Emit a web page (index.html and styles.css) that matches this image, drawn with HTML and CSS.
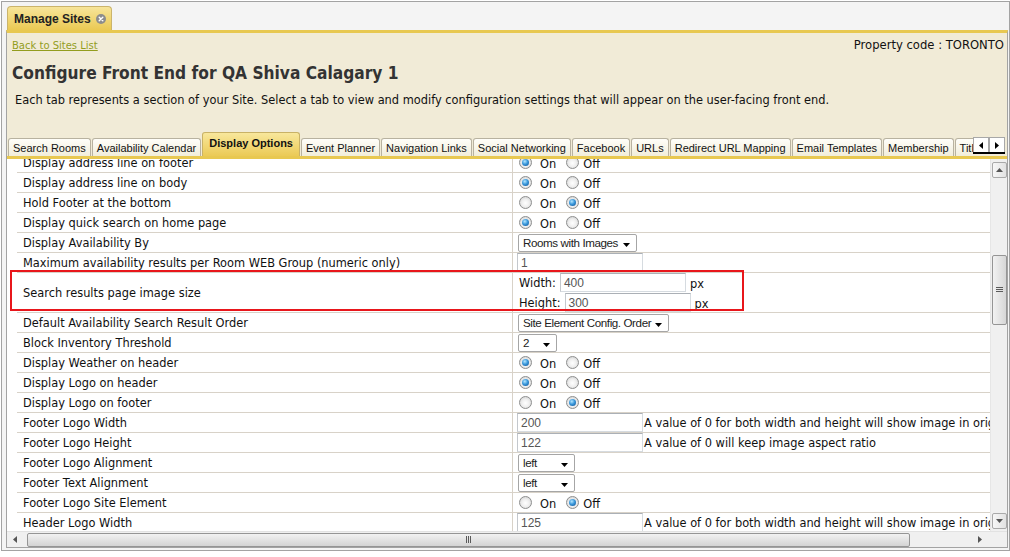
FILE: index.html
```html
<!DOCTYPE html>
<html>
<head>
<meta charset="utf-8">
<title>Manage Sites</title>
<link rel="stylesheet" href="styles.css">
</head>
<body>
<div class="frame">
  <div class="topbar">
    <div class="maintab">
      <span>Manage Sites</span>
      <svg class="close" width="10" height="10" viewBox="0 0 10 10"><circle cx="5" cy="5" r="5" fill="#8c8c8c"/><path d="M3.2 3.2 L6.8 6.8 M6.8 3.2 L3.2 6.8" stroke="#fff" stroke-width="1.4" stroke-linecap="round"/></svg>
    </div>
  </div>
  <div class="panel">
    <div class="head">
      <div class="headrow">
        <a class="back" href="#">Back to Sites List</a>
        <span class="prop">Property code : TORONTO</span>
      </div>
      <h1 class="title">Configure Front End for QA Shiva Calagary 1</h1>
      <p class="desc">Each tab represents a section of your Site. Select a tab to view and modify configuration settings that will appear on the user-facing front end.</p>
    </div>
    <div class="tabs">
      <div class="tablist">
        <div class="tab">Search Rooms</div>
        <div class="tab">Availability Calendar</div>
        <div class="tab active">Display Options</div>
        <div class="tab">Event Planner</div>
        <div class="tab">Navigation Links</div>
        <div class="tab">Social Networking</div>
        <div class="tab">Facebook</div>
        <div class="tab">URLs</div>
        <div class="tab">Redirect URL Mapping</div>
        <div class="tab">Email Templates</div>
        <div class="tab">Membership</div>
        <div class="tab">Title Bar</div>
      </div>
      <div class="tabscroll">
        <span class="tsbtn"><svg width="4" height="7" viewBox="0 0 4 7"><path d="M4 0 L0 3.5 L4 7Z" fill="#000"/></svg></span>
        <span class="tsbtn"><svg width="4" height="7" viewBox="0 0 4 7"><path d="M0 0 L4 3.5 L0 7Z" fill="#000"/></svg></span>
      </div>
    </div>
    <div class="body">
      <div class="viewport">
        <div class="rows">
          <div class="row"><div class="lab">Display address line on footer</div><div class="val"><span class="rb on"></span><span class="rl">On</span><span class="rb gap"></span><span class="rl r2">Off</span></div></div>
          <div class="row"><div class="lab">Display address line on body</div><div class="val"><span class="rb on"></span><span class="rl">On</span><span class="rb gap"></span><span class="rl r2">Off</span></div></div>
          <div class="row"><div class="lab">Hold Footer at the bottom</div><div class="val"><span class="rb"></span><span class="rl">On</span><span class="rb on gap"></span><span class="rl r2">Off</span></div></div>
          <div class="row"><div class="lab">Display quick search on home page</div><div class="val"><span class="rb on"></span><span class="rl">On</span><span class="rb gap"></span><span class="rl r2">Off</span></div></div>
          <div class="row"><div class="lab">Display Availability By</div><div class="val"><span class="sel w119">Rooms with Images<svg class="arr" width="7" height="4" viewBox="0 0 7 4"><path d="M0 0 H7 L3.5 4Z" fill="#000"/></svg></span></div></div>
          <div class="row"><div class="lab">Maximum availability results per Room WEB Group (numeric only)</div><div class="val"><span class="inp">1</span></div></div>
          <div class="row tall"><div class="lab">Search results page image size</div><div class="val stack">
            <div class="dim"><span class="dl">Width:</span><span class="inp">400</span><span class="px">px</span></div>
            <div class="dim"><span class="dl">Height:</span><span class="inp">300</span><span class="px">px</span></div>
          </div></div>
          <div class="row"><div class="lab">Default Availability Search Result Order</div><div class="val"><span class="sel w151">Site Element Config. Order<svg class="arr" width="7" height="4" viewBox="0 0 7 4"><path d="M0 0 H7 L3.5 4Z" fill="#000"/></svg></span></div></div>
          <div class="row"><div class="lab">Block Inventory Threshold</div><div class="val"><span class="sel w39">2<svg class="arr" width="7" height="4" viewBox="0 0 7 4"><path d="M0 0 H7 L3.5 4Z" fill="#000"/></svg></span></div></div>
          <div class="row"><div class="lab">Display Weather on header</div><div class="val"><span class="rb on"></span><span class="rl">On</span><span class="rb gap"></span><span class="rl r2">Off</span></div></div>
          <div class="row"><div class="lab">Display Logo on header</div><div class="val"><span class="rb on"></span><span class="rl">On</span><span class="rb gap"></span><span class="rl r2">Off</span></div></div>
          <div class="row"><div class="lab">Display Logo on footer</div><div class="val"><span class="rb"></span><span class="rl">On</span><span class="rb on gap"></span><span class="rl r2">Off</span></div></div>
          <div class="row"><div class="lab">Footer Logo Width</div><div class="val"><span class="inp">200</span><span class="hint">A value of 0 for both width and height will show image in original size</span></div></div>
          <div class="row"><div class="lab">Footer Logo Height</div><div class="val"><span class="inp">122</span><span class="hint">A value of 0 will keep image aspect ratio</span></div></div>
          <div class="row"><div class="lab">Footer Logo Alignment</div><div class="val"><span class="sel w57">left<svg class="arr" width="7" height="4" viewBox="0 0 7 4"><path d="M0 0 H7 L3.5 4Z" fill="#000"/></svg></span></div></div>
          <div class="row"><div class="lab">Footer Text Alignment</div><div class="val"><span class="sel w57">left<svg class="arr" width="7" height="4" viewBox="0 0 7 4"><path d="M0 0 H7 L3.5 4Z" fill="#000"/></svg></span></div></div>
          <div class="row"><div class="lab">Footer Logo Site Element</div><div class="val"><span class="rb"></span><span class="rl">On</span><span class="rb on gap"></span><span class="rl r2">Off</span></div></div>
          <div class="row"><div class="lab">Header Logo Width</div><div class="val"><span class="inp">125</span><span class="hint">A value of 0 for both width and height will show image in original size</span></div></div>
          <div class="row"><div class="lab">Header Logo Height</div><div class="val"><span class="inp">80</span><span class="hint">A value of 0 will keep image aspect ratio</span></div></div>
        </div>
        <div class="highlight"></div>
      </div>
      <div class="vscroll">
        <span class="sbtn"><svg width="7" height="4" viewBox="0 0 7 4"><path d="M0 4 H7 L3.5 0Z" fill="#555"/></svg></span>
        <span class="vthumb"><svg width="7" height="6" viewBox="0 0 7 6"><path d="M0 0.5 H7 M0 2.5 H7 M0 4.5 H7" stroke="#5a5a5a" stroke-width="1"/></svg></span>
        <span class="vfill"></span>
        <span class="sbtn"><svg width="7" height="4" viewBox="0 0 7 4"><path d="M0 0 H7 L3.5 4Z" fill="#555"/></svg></span>
      </div>
    </div>
    <div class="hscroll">
      <svg class="harr" width="4" height="7" viewBox="0 0 4 7"><path d="M4 0 L0 3.5 L4 7Z" fill="#555"/></svg>
      <span class="hthumb"><svg width="6" height="7" viewBox="0 0 6 7"><path d="M0.5 0 V7 M2.5 0 V7 M4.5 0 V7" stroke="#5a5a5a" stroke-width="1"/></svg></span>
      <svg class="harr r" width="4" height="7" viewBox="0 0 4 7"><path d="M0 0 L4 3.5 L0 7Z" fill="#555"/></svg>
    </div>
  </div>
</div>
</body>
</html>
```

FILE: styles.css
```css
html, body {
  margin: 0;
  padding: 0;
  background: #ffffff;
}

body {
  font-family: "DejaVu Sans", Verdana, sans-serif;
  font-size: 11.4px;
  color: #111;
}

.frame {
  margin: 1px 0 0 1px;
  width: 1007px;
  height: 548px;
  border: 1px solid #a3a3a3;
  background: #f4f4f4;
  display: flex;
  flex-direction: column;
}

.topbar {
  height: 28px;
  box-sizing: border-box;
  padding: 4px 0 0 5px;
  display: flex;
  align-items: flex-end;
}

.maintab {
  height: 24px;
  width: 105px;
  box-sizing: border-box;
  border: 1px solid #cbb46b;
  border-bottom: none;
  border-radius: 4px 4px 0 0;
  background: linear-gradient(#f7e59a, #ebc953);
  display: flex;
  align-items: center;
  padding: 1px 0 0 6px;
  gap: 5px;
  font: bold 12px "Liberation Sans", Arial, sans-serif;
  color: #222;
}

.close {
  display: block;
}

.panel {
  flex: 1;
  margin: 0 1px 2px 4px;
  border: 1px solid #a3a3a3;
  border-top: 3px solid #e8c851;
  background: #f1ebd7;
  display: flex;
  flex-direction: column;
  min-height: 0;
}

.head {
  padding: 6px 3px 0 5px;
  height: 99px;
  box-sizing: border-box;
}

.headrow {
  display: flex;
  justify-content: space-between;
  align-items: center;
  height: 12px;
}

.back {
  font-size: 10px;
  color: #939d1e;
  text-decoration: underline;
}

.prop {
  font-size: 11.6px;
  color: #111;
}

.title {
  margin: 12px 0 0;
  font: bold 17.2px "DejaVu Sans Condensed", "DejaVu Sans", Verdana, sans-serif;
  line-height: 20px;
  color: #333;
}

.desc {
  margin: 10px 0 0 3px;
  line-height: 14px;
  font-size: 11.4px;
  color: #111;
}

.tabs {
  height: 24px;
  border-bottom: 3px solid #e8c851;
  display: flex;
  align-items: flex-end;
  padding-left: 1px;
}

.tablist {
  width: 965px;
  display: flex;
  align-items: flex-end;
  overflow: hidden;
  height: 24px;
}

.tab {
  flex: none;
  height: 18px;
  box-sizing: border-box;
  padding: 1px 4px 0;
  margin-right: 1px;
  border: 1px solid #b8b2a0;
  border-bottom: none;
  border-radius: 3px 3px 0 0;
  background: linear-gradient(#fffef9, #f1edda);
  font: 11px "Liberation Sans", Arial, sans-serif;
  line-height: 16px;
  color: #111;
  white-space: nowrap;
}

.tab.active {
  height: 24px;
  padding: 1px 6px 0;
  line-height: 19px;
  font-weight: bold;
  border-color: #c9b266;
  background: linear-gradient(#f8e79c, #ebca56);
}

.tabscroll {
  display: flex;
  align-self: flex-start;
  margin-top: 5px;
  border-bottom: 2px solid #000;
}

.tsbtn {
  width: 16px;
  height: 15px;
  box-sizing: border-box;
  border: 1px solid #a8a8a8;
  border-bottom: none;
  background: #fff;
  display: flex;
  align-items: center;
  justify-content: center;
}

.body {
  flex: 1;
  display: flex;
  background: #fff;
  min-height: 0;
}

.viewport {
  flex: 1;
  position: relative;
  overflow: hidden;
  padding-left: 10px;
}

.rows {
  margin-top: -6px;
  width: 1300px;
}

.row {
  display: flex;
  height: 20px;
  box-sizing: border-box;
  border-bottom: 1px solid #d8d2c8;
}

.row.tall {
  height: 40px;
}

.lab {
  width: 496px;
  flex: none;
  box-sizing: border-box;
  border-right: 1px solid #d8d2c8;
  padding: 1px 0 0 6px;
  display: flex;
  align-items: center;
  white-space: nowrap;
  color: #111;
}

.val {
  flex: 1;
  display: flex;
  align-items: center;
  padding-left: 4px;
  white-space: nowrap;
}

.val.stack {
  flex-direction: column;
  align-items: flex-start;
  justify-content: center;
  gap: 1px;
}

.rb {
  width: 13px;
  height: 13px;
  box-sizing: border-box;
  margin-left: 2px;
  border-radius: 50%;
  border: 1px solid #8d8e8e;
  background: radial-gradient(circle at 50% 55%, #ffffff 0, #efefef 45%, #c9c9c9 100%);
  display: flex;
  align-items: center;
  justify-content: center;
  flex: none;
}

.rb.on::after {
  content: "";
  width: 7px;
  height: 7px;
  border-radius: 50%;
  background: radial-gradient(circle at 40% 35%, #b4e6ff 0, #3a98db 45%, #0b4b8e 100%);
}

.rb.gap {
  margin-left: 10px;
}

.rl {
  margin-left: 8px;
  padding-top: 3px;
  color: #111;
}

.rl.r2 {
  margin-left: 4px;
}

.sel {
  height: 18px;
  box-sizing: border-box;
  margin-left: 1px;
  border: 1px solid #a6a6a6;
  border-radius: 2px;
  background: #fff;
  display: flex;
  align-items: center;
  padding-left: 4px;
  font: 11.6px "Liberation Sans", Arial, sans-serif;
  letter-spacing: -0.4px;
  color: #222;
  position: relative;
}

.sel .arr {
  position: absolute;
  right: 6px;
  top: 8px;
}

.w119 { width: 119px; }
.w151 { width: 151px; }
.w39 { width: 39px; }
.w57 { width: 57px; }

.inp {
  width: 126px;
  height: 19px;
  box-sizing: border-box;
  border: 1px solid #d6dbe0;
  border-top-color: #abb0b6;
  border-left-color: #c4c8cd;
  background: #fff;
  display: flex;
  align-items: center;
  padding-left: 3px;
  font: 12px "Liberation Sans", Arial, sans-serif;
  color: #555;
  flex: none;
}

.hint {
  margin-left: 1px;
  color: #111;
}

.dim {
  display: flex;
  align-items: center;
  height: 19px;
  margin-left: 2px;
}

.dl {
  margin-right: 4px;
  color: #111;
}

.px {
  margin-left: 4px;
  padding-top: 2px;
  color: #111;
}

.highlight {
  position: absolute;
  left: 3px;
  top: 111px;
  width: 734px;
  height: 41px;
  box-sizing: border-box;
  border: 2px solid #e8161b;
  pointer-events: none;
}

.vscroll {
  width: 17px;
  flex: none;
  box-sizing: border-box;
  background: #f0f0f0;
  border-left: 1px solid #e6e6e6;
  display: flex;
  flex-direction: column;
  align-items: center;
  padding: 3px 0 2px;
}

.sbtn {
  width: 15px;
  height: 16px;
  box-sizing: border-box;
  border: 1px solid #a9a9a9;
  border-radius: 2px;
  background: linear-gradient(to right, #f7f7f7, #e2e2e2);
  display: flex;
  align-items: center;
  justify-content: center;
  flex: none;
}

.vthumb {
  margin-top: 77px;
  width: 15px;
  height: 70px;
  box-sizing: border-box;
  border: 1px solid #959595;
  border-radius: 2px;
  background: linear-gradient(to right, #f2f2f2, #d6d6d6);
  display: flex;
  align-items: center;
  justify-content: center;
  flex: none;
}

.vfill {
  flex: 1;
}

.hscroll {
  height: 16px;
  flex: none;
  box-sizing: border-box;
  background: #f0f0f0;
  border-top: 1px solid #e2e2e2;
  display: flex;
  align-items: center;
  padding-left: 6px;
}

.harr {
  flex: none;
  display: block;
}

.hthumb {
  margin-left: 10px;
  width: 883px;
  height: 14px;
  box-sizing: border-box;
  border: 1px solid #959595;
  border-radius: 2px;
  background: linear-gradient(#f2f2f2, #d4d4d4);
  display: flex;
  align-items: center;
  justify-content: center;
  flex: none;
}

.harr.r {
  margin-left: 68px;
}
```
